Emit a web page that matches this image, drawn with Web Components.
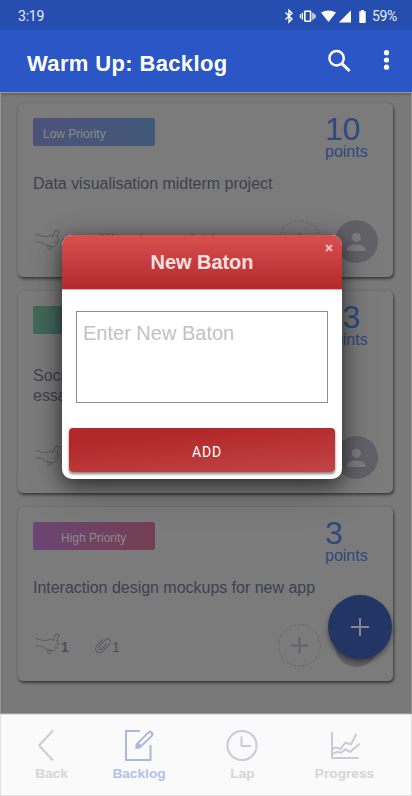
<!DOCTYPE html>
<html lang="en"><head><meta charset="utf-8"><title>Warm Up: Backlog</title>
<style>html,body{margin:0;height:100%;overflow:hidden;font-family:"Liberation Sans",Arial,sans-serif}</style></head>
<body>
<baton-app></baton-app>
<script>
const define=(name,html,setup)=>customElements.define(name,class extends HTMLElement{
  connectedCallback(){
    if(this.shadowRoot)return;
    const r=this.attachShadow({mode:'open'});
    r.innerHTML=html;
    if(setup)setup(this,r);
  }
});

define('status-bar',`<style>
:host{display:flex;height:30px;box-sizing:border-box;align-items:center;background:#264eb1;color:#e6ebf8;font:14px/30px Roboto,sans-serif;padding:2px 14px 0 18px}
span{flex:1;letter-spacing:-.2px}svg{display:block}b{font-weight:400;width:26px;white-space:nowrap;letter-spacing:-.35px}
</style><span>3:19</span>
<svg width="92" height="16" viewBox="280 8 92 16" fill="#fff">
<path d="M285.500 12.600l6.500 6.400-3 3V10.200l3 3-6.500 6.200" fill="none" stroke="#fff" stroke-width="1.400"/>
<rect x="304.800" y="11.200" width="5.800" height="10" rx=".6" fill="none" stroke="#fff" stroke-width="1.600"/>
<path d="M302.400 12.800v7M300.500 14.300v4M313 12.800v7M314.900 14.300v4" stroke="#fff" stroke-width="1.300"/>
<path d="M321 12.600q7.500-4.200 15 0L328.500 22z"/><path d="M351 10.300V22.500H338.800z"/>
<path d="M361 10h3v1.200h1.700V22.300q0 .8-.8.8h-4.800q-.8 0-.8-.8V11.200H361z"/></svg><b>59%</b>`);

define('app-bar',`<style>
:host{display:flex;height:62px;align-items:center;background:#2a56c6;color:#fff;padding:0 20px 0 27px}
h1{font-size:22px;line-height:28px;letter-spacing:.36px;margin:5px 0 0;flex:1;white-space:nowrap}
svg{display:block}
</style><h1><slot></slot></h1>
<svg width="66" height="30" viewBox="326 46 66 30"><circle cx="336.600" cy="58.300" r="7.200" fill="none" stroke="#fff" stroke-width="2.500"/><path d="M341.600 63.300L349.600 71" stroke="#fff" stroke-width="3"/><g fill="#fff"><circle cx="386.500" cy="52.700" r="2.600"/><circle cx="386.500" cy="60" r="2.600"/><circle cx="386.500" cy="67.200" r="2.600"/></g></svg>`);

define('hand-icon',`<style>:host{display:block;width:25px;height:21px}svg{display:block}</style>
<svg width="25" height="21" viewBox="0 0 25 21" fill="none" stroke="#5c5c5c" stroke-width=".95" stroke-linejoin="round"><path d="M.5 5.500C5 6.500 9 8.200 12 7.300 15 6.300 16 5.900 18.500 6.300L21 .8 24.200 1.800 22 7.800 23.300 9 22.500 13.500 20.500 16.300 18.500 18.300 16 17.300C14 18.200 10 15.400 8 14 5.500 12.700 3 12.800.500 12.800M18.500 6.300L17.500 8.500M20.500 7.200L22 7.800M21.500 10.500L20.500 11.500M21 13.200L19.800 14.200"/><circle cx="14.300" cy="18.500" r="1.700"/></svg>`);

define('clip-icon',`<style>:host{display:block;width:16px;height:17px}svg{display:block}</style>
<svg width="16" height="17" viewBox="0 0 16 17" fill="none" stroke="#5c5c60" stroke-width="1.100"><g transform="rotate(43 8 8.500)"><path d="M3.800 4.500V13.200a4 4 0 0 0 8 0V2.400a2.900 2.900 0 0 0-5.800 0V12.400a1.900 1.900 0 0 0 3.600 0V4.500"/></g></svg>`);

define('task-avatar',`<style>:host{display:block;width:43px;height:43px}svg{display:block}</style>
<svg width="43" height="43" viewBox="0 0 43 43"><circle cx="21.500" cy="21.500" r="21.500" fill="#626167"/><g fill="#7d7d7f"><circle cx="21.300" cy="17.300" r="4.600"/><path d="M12.200 30.900v-1.500c0-6.600 18.200-6.600 18.200 0v1.500z"/></g></svg>`);

define('add-slot',`<style>:host{display:block;width:43px;height:43px}svg{display:block}</style>
<svg width="43" height="43" viewBox="0 0 43 43" fill="none"><circle cx="21.500" cy="21.500" r="20.800" stroke="#626262" stroke-dasharray="2 2"/><path d="M21.500 13v17M13 21.500h17" stroke="#626268" stroke-width="2"/></svg>`);

define('priority-tag',`<style>:host{display:block;width:122px;height:28px;box-sizing:border-box;border-radius:2px;color:#8b8b8b;font-size:12px;line-height:32px;white-space:nowrap}</style><slot></slot>`);

define('task-card',`<style>
:host{display:flex;flex-direction:column;box-sizing:border-box;height:174px;padding:14px 14px 14.500px 15px;border-radius:5px;background:#7b7b7b;box-shadow:1px 2px 3px rgba(0,0,0,.5),0 0 2px rgba(0,0,0,.12)}
:host([tall]){height:202px}
.top{display:grid;grid-template-columns:122px 1fr 54px;height:57px}
.tag{padding-top:1px}
.pts{color:#2d497d;font-size:16px;line-height:16px}
.num{font-size:32px;line-height:25px;padding-bottom:2px;letter-spacing:-.3px;min-width:35px;display:block}
:host([right]) .num{width:35px;text-align:right}
p{margin:0;color:#403f4d;font-size:16px;line-height:20px;flex:1;white-space:pre;letter-spacing:-.02px}
:host([tall]) p{padding-top:4px}
.foot{display:flex;height:43px;align-items:center;color:#4e4e55;font-size:14px}
hand-icon{margin:-3px 0 0 2px}
.foot b{width:34px;margin:3px 0 0 1px}
.foot i{font-style:normal;flex:1;margin:3px 0 0 1px}
add-slot{margin-right:14.500px}task-avatar{margin-right:1px}
</style><div class="top"><div class="tag"><slot name="tag"></slot></div><div></div><div class="pts"><span class="num"></span>points</div></div>
<p><slot></slot></p><div class="foot"><hand-icon></hand-icon><b>1</b><clip-icon></clip-icon><i>1</i><add-slot></add-slot><task-avatar></task-avatar></div>`,
(el,r)=>{r.querySelector('.num').textContent=el.getAttribute('points')});

define('fab-button',`<style>:host{display:block;width:64px;height:64px;border-radius:50%;background:#233565;box-shadow:0 3px 5px rgba(0,0,0,.42)}svg{display:block}</style>
<svg width="64" height="64" viewBox="0 0 64 64"><path d="M32 23v18M23 32h18" stroke="#858790" stroke-width="2"/></svg>`);

define('baton-dialog',`<style>
:host{display:flex;flex-direction:column;box-sizing:border-box;width:280px;height:244px;border-radius:10px;background:#fff;overflow:hidden;box-shadow:0 5px 20px rgba(0,0,0,.58),0 12px 38px rgba(0,0,0,.22)}
header{height:55px;box-sizing:border-box;background:linear-gradient(#d95051,#b32a2c);border-bottom:1px solid #e9aaab;color:#fbe0e0;text-align:center;position:relative}
h2{margin:0;font-size:20px;line-height:55px;letter-spacing:-.05px}
header svg{position:absolute;right:9px;top:9px}
.field{margin:21px 14px 0;height:92px;box-sizing:border-box;border:1px solid #8e8e8e;color:#c2c2c2;font-size:20px;line-height:26px;padding:8px 6px;letter-spacing:0}
.add{margin:25px 7px 0;height:44px;border-radius:4px;background:linear-gradient(175deg,#b22729 20%,#c14546);box-shadow:0 2px 3px rgba(0,0,0,.5);color:#fff;font:14px/48px Roboto,sans-serif;letter-spacing:.8px;text-align:center;padding-left:10px}
</style><header><h2>New Baton</h2><svg width="8" height="8" viewBox="0 0 8 8"><path d="M1 1l6 6M7 1L1 7" stroke="#f0bcbc" stroke-width="2"/></svg></header>
<div class="field">Enter New Baton</div><div class="add" role="button">ADD</div>`);

define('nav-item',`<style>:host{display:flex;flex-direction:column;align-items:center;color:#d5d5d5;font-size:13.700px;font-weight:700;line-height:16px;gap:3px}
:host([active]){color:#b2c1e9}</style><slot name="icon"></slot><span><slot></slot></span>`);

define('nav-bar',`<style>
:host{display:flex;height:82px;box-sizing:border-box;background:#fafafa;border:1px solid #dfdfdf;padding:14px 0 0 6.500px}
svg{display:block}
</style>
<nav-item style="width:88px"><svg slot="icon" width="34" height="34" fill="none" stroke="#cbcad8" stroke-width="1.900"><path d="M18 1.500L4 16.500 18 31.500"/></svg>Back</nav-item>
<nav-item active style="width:87px"><svg slot="icon" width="34" height="34" fill="none" stroke="#a9b8df" stroke-width="2"><path d="M18 2H4v29H28.500V16" stroke-linejoin="round"/><path d="M17 16L28 5.300" stroke-width="6.600" stroke-linecap="round"/><path d="M18.800 14.300L28 5.300" stroke="#fafafa" stroke-width="2.600" stroke-linecap="round"/><path d="M13.700 19.500l1-4.600 3.500 3.800z" fill="#a9b8df" stroke-width="1" stroke-linejoin="round"/></svg>Backlog</nav-item>
<nav-item style="width:120px"><svg slot="icon" width="34" height="34" fill="none" stroke="#cbcad8" stroke-width="2"><circle cx="16" cy="16.500" r="14.600"/><path d="M15.500 7.500V17H25"/></svg>Lap</nav-item>
<nav-item style="width:84px"><svg slot="icon" width="34" height="34" fill="none" stroke="#cbcad8" stroke-width="2"><path d="M4 3v26H30.700"/><path d="M4 20.300l3.300-2 5 1.700 5-6.300 5.700 1.600L28.300 5M4 25.300l5-2.600 4.300 1 4-3.400 5 2.400 9.400-8"/></svg>Progress</nav-item>`);

define('baton-app',`<style>
:host{display:flex;flex-direction:column;width:412px;height:796px;position:relative;overflow:hidden}
main{height:622px;box-sizing:border-box;border:1px solid #989898;background:#797979;padding:10px 18px 0 17px;display:flex;flex-direction:column;gap:14px;box-shadow:inset 0 3px 3px -1px rgba(0,0,0,.2)}
baton-dialog{position:absolute;left:62px;top:235px}
.marks{position:absolute;left:100px;top:233px}
fab-button{position:absolute;left:327.500px;top:595px}
nav-bar{position:relative}
</style><status-bar></status-bar><app-bar>Warm Up: Backlog</app-bar>
<main>
<task-card points="10"><priority-tag slot="tag" style="padding-left:10px;background:linear-gradient(110deg,#4d5279,#405979)">Low Priority</priority-tag>Data visualisation midterm project</task-card>
<task-card points="3" tall right><priority-tag slot="tag" style="background:linear-gradient(110deg,#43695a,#3a6060)"></priority-tag>Social
essay</task-card>
<task-card points="3"><priority-tag slot="tag" style="padding-left:28px;background:linear-gradient(110deg,#6b4576,#743f50)">High Priority</priority-tag>Interaction design mockups for new app</task-card>
</main><nav-bar></nav-bar><fab-button></fab-button>
<baton-dialog></baton-dialog><svg class="marks" width="116" height="2" stroke="#333" stroke-opacity=".75"><path d="M.5 1.500h2M12 1.500h2M40 1.500h1.500M112 1.500h1.500"/><path d="M91 1.500h4M103 1.500h1" stroke-opacity=".4"/></svg>`);
</script></body></html>
